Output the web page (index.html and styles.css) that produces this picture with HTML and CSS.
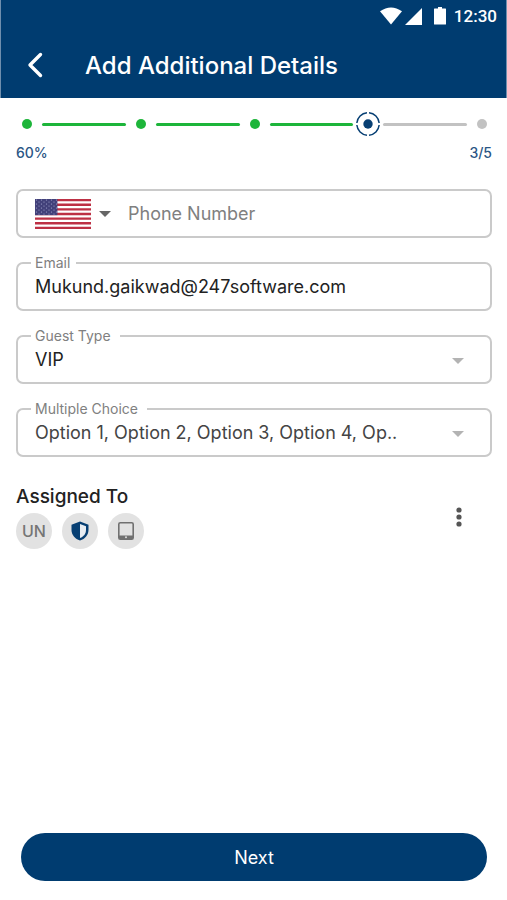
FILE: index.html
```html
<!DOCTYPE html>
<html lang="en">
<head>
<meta charset="utf-8">
<meta name="viewport" content="width=device-width, initial-scale=1">
<title>Add Additional Details</title>
<link rel="stylesheet" href="styles.css">
</head>
<body>
<header class="header">
  <div class="status">
    <svg width="22" height="18" viewBox="0 0 22 18" fill="currentColor" aria-hidden="true"><path d="M0 4.300Q11-3.300 22 4.300L11 17.500z"/></svg>
    <svg class="signal" width="17" height="17" viewBox="0 0 17 17" fill="currentColor" aria-hidden="true"><path d="M17 0v17H0z"/></svg>
    <svg class="battery" width="12" height="18" viewBox="0 0 12 18" fill="currentColor" aria-hidden="true"><path d="M4 0h4v1.500h3.500q.5 0 .5.500V17q0 .5-.5.500H.5q-.5 0-.5-.5V2q0-.5.5-.5H4z"/></svg>
    <time class="clock">12:30</time>
  </div>
  <div class="titlebar">
    <button class="back" type="button" aria-label="Back">
      <svg width="17" height="26" viewBox="0 0 17 26" fill="none" stroke="currentColor" stroke-width="3.400" stroke-linecap="round" stroke-linejoin="round" aria-hidden="true"><path d="M14.500 2.500L4 13l10.500 10.500"/></svg>
    </button>
    <h1 class="title">Add Additional Details</h1>
  </div>
</header>
<main class="main">
  <section class="progress" aria-label="Progress">
    <div class="steps">
      <span class="dot"></span><span class="line"></span>
      <span class="dot"></span><span class="line"></span>
      <span class="dot"></span><span class="line"></span>
      <svg class="current" width="24" height="24" viewBox="0 0 24 24" aria-hidden="true">
        <circle cx="12" cy="12" r="11.200" fill="none" stroke="currentColor" stroke-width="1.500" pathLength="100" stroke-dasharray="22 3" stroke-dashoffset="-1.500"/>
        <circle cx="12" cy="12" r="4.700" fill="currentColor"/>
      </svg>
      <span class="line todo"></span><span class="dot todo"></span>
    </div>
    <div class="counts"><span>60%</span><span>3/5</span></div>
  </section>
  <form class="form" id="details">
    <div class="field phone">
      <button class="country" type="button" aria-label="Country: United States">
        <svg width="56" height="30" viewBox="0 0 56 30" aria-hidden="true">
          <defs><pattern id="stars" width="5" height="4" patternUnits="userSpaceOnUse"><circle cx="1.500" cy="1" r=".6" fill="#a5a5cf"/><circle cx="4" cy="3" r=".6" fill="#a5a5cf"/></pattern></defs>
          <path fill="#fff" d="M0 0h56v30H0z"/>
          <path stroke="#bd3044" stroke-width="2.310" d="M0 1.150h56M0 5.770h56M0 10.380h56M0 15h56M0 19.620h56M0 24.230h56M0 28.850h56"/>
          <path fill="#42417a" d="M0 0h22.400v16.150H0z"/><path fill="url(#stars)" d="M0 0h22.400v16.150H0z"/>
        </svg>
        <svg width="12" height="6" viewBox="0 0 12 6" fill="#666" aria-hidden="true"><path d="M0 0h12L6 6z"/></svg>
      </button>
      <input class="control" type="tel" placeholder="Phone Number" aria-label="Phone Number">
    </div>
    <div class="field">
      <label class="label" for="email">Email</label>
      <input class="control" id="email" type="email" value="Mukund.gaikwad@247software.com">
    </div>
    <div class="field">
      <label class="label wide" for="guest">Guest Type</label>
      <select class="control" id="guest"><option>VIP</option></select>
      <svg class="caret" width="12" height="6" viewBox="0 0 12 6" fill="currentColor" aria-hidden="true"><path d="M0 0h12L6 6z"/></svg>
    </div>
    <div class="field">
      <label class="label wide" for="choice">Multiple Choice</label>
      <select class="control soft" id="choice"><option>Option 1, Option 2, Option 3, Option 4, Op..</option></select>
      <svg class="caret" width="12" height="6" viewBox="0 0 12 6" fill="currentColor" aria-hidden="true"><path d="M0 0h12L6 6z"/></svg>
    </div>
  </form>
  <section class="assigned">
    <div>
      <h2 class="subtitle">Assigned To</h2>
      <div class="badges">
        <span class="badge">UN</span>
        <span class="badge"><svg width="18" height="20" viewBox="0 0 18 20" aria-hidden="true"><path fill="#073f73" d="M9 .5l8.500 3.300V9c0 5-3.500 9-8.500 10.500C4 18 .5 14 .5 9V3.800z"/><path fill="#e8edf2" d="M9 3l6 2.300V9c0 3.700-2.400 6.700-6 8z"/></svg></span>
        <span class="badge"><svg width="16" height="18" viewBox="0 0 16 18" aria-hidden="true"><rect x=".8" y=".8" width="14.400" height="16.400" rx="1.500" fill="none" stroke="#707070" stroke-width="1.600"/><path fill="#707070" d="M1 13.500h14V17H1z"/><circle cx="8" cy="15.300" r="1" fill="#ddd"/></svg></span>
      </div>
    </div>
    <button class="more" type="button" aria-label="More options">
      <svg width="6" height="20" viewBox="0 0 6 20" fill="currentColor" aria-hidden="true"><circle cx="3" cy="3" r="2.600"/><circle cx="3" cy="10" r="2.600"/><circle cx="3" cy="17" r="2.600"/></svg>
    </button>
  </section>
</main>
<footer class="footer"><button class="next" type="submit" form="details">Next</button></footer>
</body>
</html>
```
FILE: styles.css
```css
* { box-sizing: border-box; }

body {
  margin: 0;
  min-height: 100vh;
  display: flex;
  flex-direction: column;
  background: #fff;
  color: #222;
  font-family: Inter, "Liberation Sans", sans-serif;
}

button {
  padding: 0;
  border: 0;
  background: none;
  color: inherit;
  font: inherit;
  cursor: pointer;
}

svg { display: block; flex: none; }

.header {
  border: solid #6f8fae;
  border-width: 0 1px;
  background: #003c70;
  color: #fff;
}

.status {
  height: 32px;
  padding-right: 9px;
  display: flex;
  align-items: center;
  justify-content: flex-end;
}

.signal { margin-left: 3px; }
.battery { margin-left: 12px; }

.clock {
  margin-left: 8px;
  font: 500 17px/20px Roboto, sans-serif;
}

.titlebar {
  height: 66px;
  padding-left: 25px;
  display: flex;
  align-items: center;
  gap: 42px;
}

.title {
  margin: 0;
  padding-top: 2px;
  font-size: 24px;
  line-height: 32px;
  font-weight: 500;
}

.main { padding: 14px 15px 0 16px; }

.steps {
  height: 24px;
  padding: 0 5px 0 6px;
  display: flex;
  align-items: center;
  gap: 10px;
}

.dot {
  width: 10px;
  height: 10px;
  border-radius: 50%;
  background: #1db53a;
}

.line {
  flex: 1;
  height: 3px;
  border-radius: 2px;
  background: #1db53a;
}

.todo { background: #c2c2c2; }

.current {
  margin: 0 -7px;
  color: #073f73;
}

.counts {
  margin-top: 8px;
  display: flex;
  justify-content: space-between;
  color: #2b5685;
  font-size: 14px;
  line-height: 18px;
  font-weight: 500;
}

.form {
  margin-top: 27px;
  display: grid;
  gap: 24px;
}

.field {
  position: relative;
  height: 49px;
  display: flex;
  align-items: stretch;
  border: 2px solid #cacaca;
  border-radius: 7px;
}

.label {
  position: absolute;
  top: -9px;
  left: 13px;
  padding: 0 6px 0 4px;
  background: #fff;
  color: #808080;
  font-size: 14px;
  line-height: 16px;
}

.wide { padding-right: 9px; }

.control {
  flex: 1;
  min-width: 0;
  padding: 0 50px 0 17px;
  border: 0;
  border-radius: 7px;
  outline: 0;
  appearance: none;
  background: transparent;
  color: #222;
  font: 400 18px/24px Inter, "Liberation Sans", sans-serif;
}

.soft { color: #444; }

.control::placeholder { color: #808080; opacity: 1; }

.caret {
  position: absolute;
  top: calc(50% - 2px);
  right: 26px;
  color: #b3b3b3;
  pointer-events: none;
}

.country {
  padding-left: 17px;
  display: flex;
  align-items: center;
  gap: 8px;
}

.assigned {
  margin-top: 28px;
  padding-right: 30px;
  display: flex;
  align-items: center;
  justify-content: space-between;
}

.subtitle {
  margin: 0;
  font-size: 19px;
  line-height: 24px;
  font-weight: 500;
}

.badges {
  margin-top: 4px;
  display: flex;
  gap: 10px;
}

.badge {
  width: 36px;
  height: 36px;
  display: flex;
  align-items: center;
  justify-content: center;
  border-radius: 50%;
  background: #e2e2e2;
  color: #757575;
  font-size: 16px;
  font-weight: 500;
}

.more { color: #555; }

.footer {
  margin-top: auto;
  padding: 24px 20px 19px 21px;
}

.next {
  width: 100%;
  height: 48px;
  border-radius: 24px;
  background: #003c70;
  color: #fff;
  font-size: 18px;
  font-weight: 400;
}
```
